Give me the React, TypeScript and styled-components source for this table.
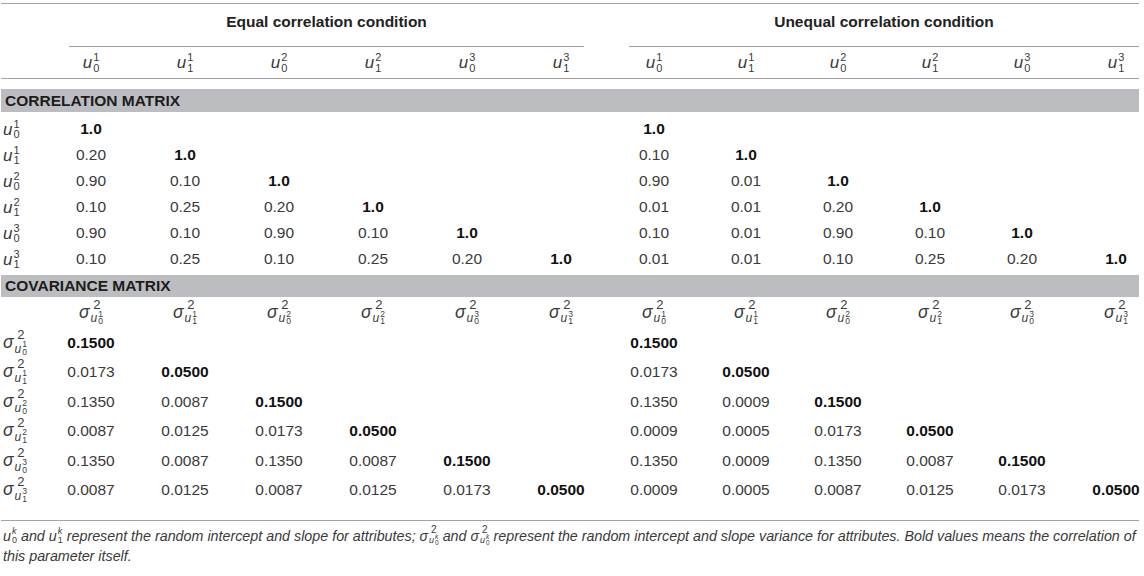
import React from "react";
import styled, { createGlobalStyle } from "styled-components";

const GlobalStyle = createGlobalStyle`
  html, body { margin: 0; padding: 0; background: #ffffff; }
  body { font-family: "Liberation Sans", Arial, Helvetica, sans-serif; color: #333333; }
`;

const Page = styled.div`
  width: 1144px;
  height: 576px;
  overflow: hidden;
  box-sizing: border-box;
  padding: 3px 0 0 1px;
`;

const Grid = styled.div`
  display: grid;
  width: 1138px;
  grid-template-columns: 43px repeat(6, 94px) repeat(5, 92px) 71px;
`;

const Rule = styled.div<{ $mt?: number }>`
  grid-column: 1 / -1;
  height: 1px;
  margin-top: ${(p) => p.$mt ?? 0}px;
  background: #a3a3a3;
`;

const GroupCell = styled.div<{ $from: number; $to: number; $ml: number; $mr: number }>`
  grid-column: ${(p) => p.$from} / ${(p) => p.$to};
  margin: 0 ${(p) => p.$mr}px 0 ${(p) => p.$ml}px;
  height: 43px;
  box-sizing: border-box;
  padding-bottom: 6px;
  display: flex;
  align-items: center;
  justify-content: center;
  border-bottom: 1px solid #a3a3a3;
  font-size: 15.5px;
  font-weight: 700;
  color: #222222;
`;

const Bar = styled.div<{ $mt: number; $mb: number; $h: number }>`
  grid-column: 1 / -1;
  height: ${(p) => p.$h}px;
  margin: ${(p) => p.$mt}px 0 ${(p) => p.$mb}px;
  background: #bcbdc0;
  display: flex;
  align-items: center;
  padding-left: 4px;
  font-size: 15.5px;
  font-weight: 700;
  color: #1c1c1c;
`;

const Cell = styled.div<{ $h: number; $bold?: boolean; $last?: boolean }>`
  height: ${(p) => p.$h}px;
  display: flex;
  align-items: center;
  justify-content: center;
  box-sizing: border-box;
  padding-left: ${(p) => (p.$last ? 25 : 0)}px;
  font-size: 15.5px;
  font-weight: ${(p) => (p.$bold ? 700 : 400)};
  color: ${(p) => (p.$bold ? "#111111" : "#3a3a3a")};
  white-space: nowrap;
`;

const LabelCell = styled.div<{ $h: number }>`
  height: ${(p) => p.$h}px;
  display: flex;
  align-items: center;
  justify-content: flex-start;
  padding-left: 2px;
  color: #3a3a3a;
`;

const MathVar = styled.span<{ $size: number }>`
  display: inline-flex;
  align-items: center;
  font-family: "Liberation Sans", Arial, Helvetica, sans-serif;
  font-style: italic;
  font-weight: 400;
  font-size: ${(p) => p.$size}px;
  line-height: 1;
  color: #3a3a3a;
`;

const Scripts = styled.span<{ $size: number; $center?: boolean }>`
  display: inline-flex;
  flex-direction: column;
  align-items: ${(p) => (p.$center ? "center" : "flex-start")};
  font-style: normal;
  font-size: ${(p) => p.$size}px;
  line-height: 0.92;
  margin-left: 1px;
`;

const KScript = styled.span`
  font-style: italic;
`;

const Note = styled.div`
  margin-top: 4px;
  padding-left: 2px;
  width: 1140px;
  font-size: 14.3px;
  font-style: italic;
  line-height: 20px;
  color: #3a3a3a;
`;

type UProps = { sub: React.ReactNode; sup: React.ReactNode; size?: number; script?: number };

const U = ({ sub, sup, size = 17, script = 11 }: UProps) => (
  <MathVar $size={size}>
    u
    <Scripts $size={script}>
      <span>{sup}</span>
      <span>{sub}</span>
    </Scripts>
  </MathVar>
);

type SProps = { sub: React.ReactNode; sup: React.ReactNode; small?: boolean };

const Sigma = ({ sub, sup, small }: SProps) => (
  <MathVar $size={small ? 14 : 17.5}>
    σ
    <Scripts $size={small ? 10 : 13} $center>
      <span>2</span>
      <U sub={sub} sup={sup} size={small ? 9 : 12} script={small ? 6.5 : 8.5} />
    </Scripts>
  </MathVar>
);

const labels: [string, string][] = [
  ["0", "1"],
  ["1", "1"],
  ["0", "2"],
  ["1", "2"],
  ["0", "3"],
  ["1", "3"],
];

const corrEqual = [
  ["1.0"],
  ["0.20", "1.0"],
  ["0.90", "0.10", "1.0"],
  ["0.10", "0.25", "0.20", "1.0"],
  ["0.90", "0.10", "0.90", "0.10", "1.0"],
  ["0.10", "0.25", "0.10", "0.25", "0.20", "1.0"],
];
const corrUnequal = [
  ["1.0"],
  ["0.10", "1.0"],
  ["0.90", "0.01", "1.0"],
  ["0.01", "0.01", "0.20", "1.0"],
  ["0.10", "0.01", "0.90", "0.10", "1.0"],
  ["0.01", "0.01", "0.10", "0.25", "0.20", "1.0"],
];
const covEqual = [
  ["0.1500"],
  ["0.0173", "0.0500"],
  ["0.1350", "0.0087", "0.1500"],
  ["0.0087", "0.0125", "0.0173", "0.0500"],
  ["0.1350", "0.0087", "0.1350", "0.0087", "0.1500"],
  ["0.0087", "0.0125", "0.0087", "0.0125", "0.0173", "0.0500"],
];
const covUnequal = [
  ["0.1500"],
  ["0.0173", "0.0500"],
  ["0.1350", "0.0009", "0.1500"],
  ["0.0009", "0.0005", "0.0173", "0.0500"],
  ["0.1350", "0.0009", "0.1350", "0.0087", "0.1500"],
  ["0.0009", "0.0005", "0.0087", "0.0125", "0.0173", "0.0500"],
];

const rowCells = (eq: string[], uneq: string[], h: number, key: string) => {
  const out: React.ReactNode[] = [];
  for (let side = 0; side < 2; side++) {
    const vals = side === 0 ? eq : uneq;
    for (let i = 0; i < 6; i++) {
      const v = vals[i] ?? "";
      const bold = i === vals.length - 1;
      out.push(
        <Cell key={`${key}-${side}-${i}`} $h={h} $bold={bold} $last={side === 1 && i === 5}>
          {v}
        </Cell>
      );
    }
  }
  return out;
};

export default function App() {
  return (
    <Page>
      <GlobalStyle />
      <Grid>
        <Rule />
        <GroupCell $from={2} $to={8} $ml={25} $mr={24}>
          Equal correlation condition
        </GroupCell>
        <GroupCell $from={8} $to={14} $ml={21} $mr={0}>
          Unequal correlation condition
        </GroupCell>

        <LabelCell $h={31} />
        {[0, 1].flatMap((side) =>
          labels.map(([sub, sup], i) => (
            <Cell key={`h-${side}-${i}`} $h={31} $last={side === 1 && i === 5}>
              <U sub={sub} sup={sup} />
            </Cell>
          ))
        )}
        <Rule />

        <Bar $mt={10} $mb={4} $h={23}>
          CORRELATION MATRIX
        </Bar>
        {labels.map(([sub, sup], r) => (
          <React.Fragment key={`cr-${r}`}>
            <LabelCell $h={26}>
              <U sub={sub} sup={sup} />
            </LabelCell>
            {rowCells(corrEqual[r], corrUnequal[r], 26, `cr-${r}`)}
          </React.Fragment>
        ))}

        <Bar $mt={3} $mb={0} $h={22}>
          COVARIANCE MATRIX
        </Bar>
        <LabelCell $h={31} />
        {[0, 1].flatMap((side) =>
          labels.map(([sub, sup], i) => (
            <Cell key={`ch-${side}-${i}`} $h={31} $last={side === 1 && i === 5}>
              <Sigma sub={sub} sup={sup} />
            </Cell>
          ))
        )}
        {labels.map(([sub, sup], r) => (
          <React.Fragment key={`cv-${r}`}>
            <LabelCell $h={29.5}>
              <Sigma sub={sub} sup={sup} />
            </LabelCell>
            {rowCells(covEqual[r], covUnequal[r], 29.5, `cv-${r}`)}
          </React.Fragment>
        ))}
        <Rule $mt={15} />
      </Grid>
      <Note>
        <U sub="0" sup={<KScript>k</KScript>} size={14.3} script={9} /> and{" "}
        <U sub="1" sup={<KScript>k</KScript>} size={14.3} script={9} /> represent the random intercept and
        slope for attributes; <Sigma sub="0" sup={<KScript>k</KScript>} small /> and{" "}
        <Sigma sub="0" sup={<KScript>k</KScript>} small /> represent the random intercept and slope variance
        for attributes. Bold values means the correlation of this parameter itself.
      </Note>
    </Page>
  );
}
